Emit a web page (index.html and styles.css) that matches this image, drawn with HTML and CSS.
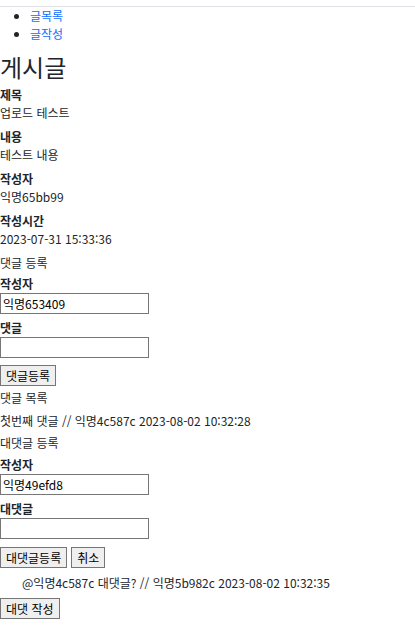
FILE: index.html
```
<!DOCTYPE html>
<html lang="ko">
<head>
<meta charset="utf-8">
<link rel="stylesheet" href="styles.css">
</head>
<body>
<div class="topbar"></div>
<ul class="nav">
  <li><a href="#">글목록</a></li>
  <li><a href="#">글작성</a></li>
</ul>
<h2 class="title">게시글</h2>
<dl class="post">
  <dt>제목</dt><dd>업로드 테스트</dd>
  <dt>내용</dt><dd>테스트 내용</dd>
  <dt>작성자</dt><dd>익명65bb99</dd>
  <dt>작성시간</dt><dd>2023-07-31 15:33:36</dd>
</dl>
<div class="sec">댓글 등록</div>
<div class="field first"><label class="lbl">작성자</label><input class="inp" type="text" value="익명653409"></div>
<div class="field"><label class="lbl">댓글</label><input class="inp" type="text"></div>
<div class="btnrow"><button class="btn">댓글등록</button></div>
<div class="sec list">댓글 목록</div>
<div class="comment">첫번째 댓글 // 익명4c587c 2023-08-02 10:32:28</div>
<div class="sec sub">대댓글 등록</div>
<div class="field first2"><label class="lbl">작성자</label><input class="inp" type="text" value="익명49efd8"></div>
<div class="field"><label class="lbl">대댓글</label><input class="inp" type="text"></div>
<div class="btnrow row2"><button class="btn">대댓글등록</button><button class="btn">취소</button></div>
<div class="reply">@익명4c587c 대댓글? // 익명5b982c 2023-08-02 10:32:35</div>
<div class="btnrow row3"><button class="btn">대댓 작성</button></div>
</body>
</html>
```
FILE: styles.css
```
* { box-sizing: border-box; }
body {
  margin: 0;
  font-family: "Noto Sans CJK KR", "Noto Sans", sans-serif;
  font-size: 12px;
  line-height: 18px;
  color: #212529;
  background: #fff;
}
.topbar { height: 7px; border-bottom: 1px solid #dee2e6; }
.nav { margin: 0; padding-left: 30px; }
.nav a { color: #0d6efd; text-decoration: none; }
.title {
  margin: 9px 0 5px;
  font-size: 24px;
  font-weight: 400;
  line-height: 29px;
}
.post { margin: 0; }
.post dt { font-weight: 600; }
.post dd { margin: 0 0 6px; }
.sec { margin: 0; }
.field { margin-top: 5px; }
.field.first { margin-top: 3px; }
.field.first2 { margin-top: 4px; }
.lbl { display: block; font-weight: 600; line-height: 18px; }
.inp {
  display: block;
  width: 149px;
  height: 21px;
  margin: 0;
  padding: 1px 2px;
  border: 1px solid #767676;
  border-radius: 0;
  font-family: inherit;
  font-size: 12px;
  color: #000;
}
.btnrow { margin-top: 7px; display: flex; gap: 4px; }
.btn {
  height: 21px;
  margin: 0;
  padding: 0 5px;
  border: 1px solid #767676;
  border-radius: 0;
  background: #efefef;
  font-family: inherit;
  font-size: 12px;
  line-height: 18px;
  color: #000;
}
.sec.list { margin-top: 3px; }
.comment { margin-top: 5px; }
.sec.sub { margin-top: 4px; }
.row2 { margin-top: 8px; }
.reply { margin-top: 6px; padding-left: 22px; }
.row3 { margin-top: 6px; }
```
